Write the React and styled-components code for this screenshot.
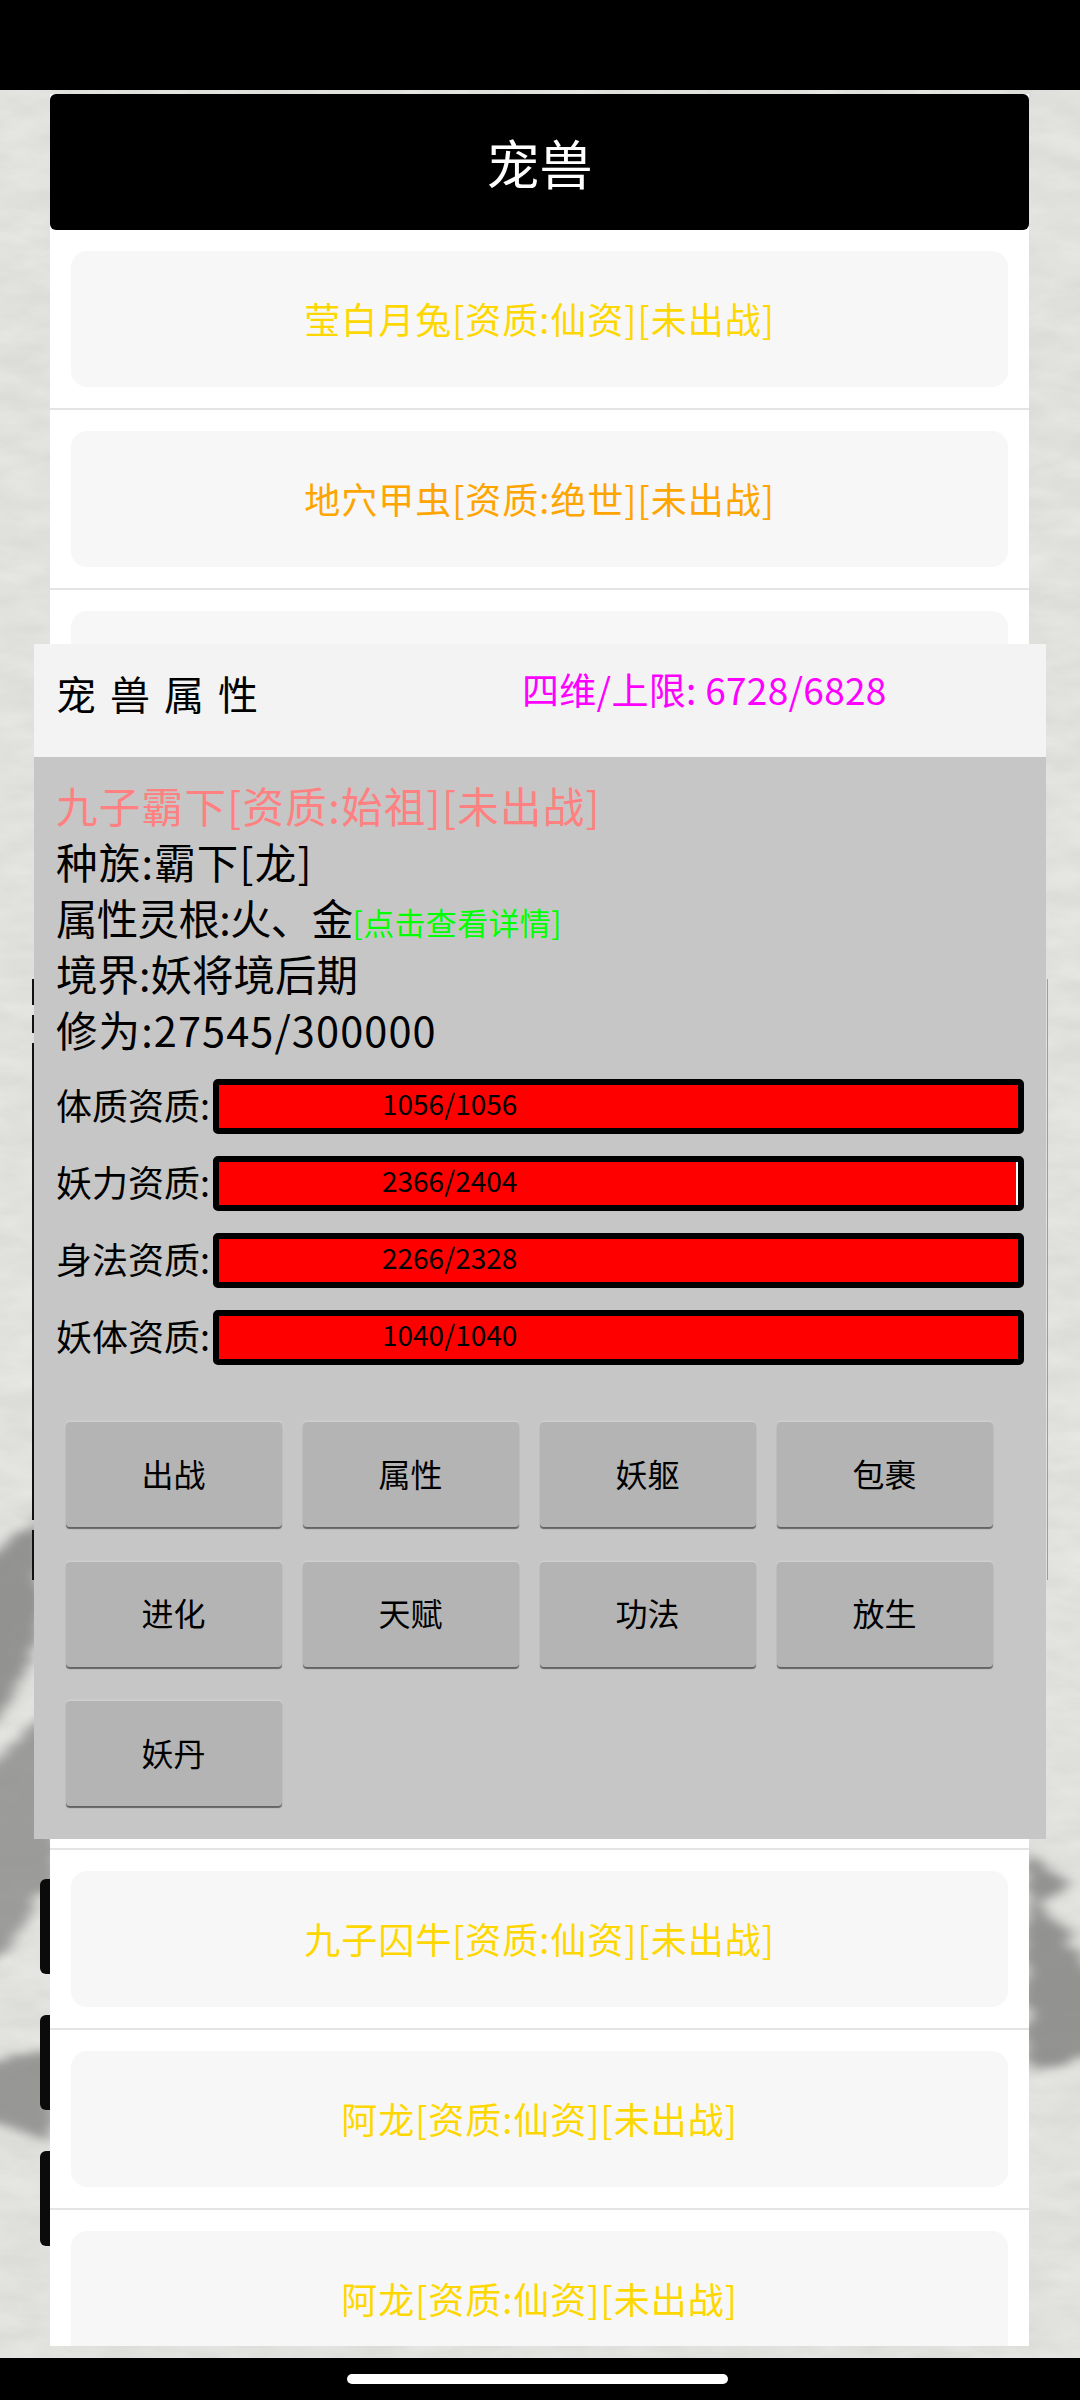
import React from 'react'
import styled, { createGlobalStyle } from 'styled-components'

const GlobalStyle = createGlobalStyle`
  html, body {
    margin: 0;
    padding: 0;
    background: #000;
  }
  * {
    box-sizing: border-box;
  }
`

const Page = styled.div`
  width: 1080px;
  height: 2400px;
  display: grid;
  grid-template-rows: 90px 1fr 42px;
  overflow: hidden;
  font-family: 'Noto Sans CJK SC', 'Noto Sans', sans-serif;
  background: #000;
`

const StatusBar = styled.div`
  background: #000;
`

const Stage = styled.main`
  position: relative;
  padding-top: 4px;
  overflow: hidden;
  background: #dcdcd9;
`

const Backdrop = styled.svg`
  position: absolute;
  inset: 0;
  width: 100%;
  height: 100%;
`

const SideTab = styled.div`
  position: absolute;
  left: 40px;
  top: ${(p) => p.$top}px;
  width: 16px;
  height: 95px;
  border-radius: 6px 0 0 6px;
  background: #0b0b0b;
`

const BehindDialog = styled.div`
  position: absolute;
  left: 32px;
  top: 889px;
  width: 1016px;
  height: 601px;
  border-right: 1px solid #9c9c9c;
  &::before {
    content: '';
    position: absolute;
    left: 0;
    top: 0;
    bottom: 0;
    width: 2px;
    background: linear-gradient(
      #111 0 26px,
      transparent 26px 36px,
      #111 36px 54px,
      transparent 54px 64px,
      #111 64px 541px,
      transparent 541px 551px,
      #111 551px
    );
  }
`

const Modal = styled.section`
  position: relative;
  margin: 0 50px;
  width: 979px;
  height: 2252px;
  overflow: hidden;
  background: #fff;
`

const ModalHeader = styled.header`
  height: 136px;
  display: flex;
  align-items: center;
  justify-content: center;
  border-radius: 6px;
  background: #000;
  color: #fff;
  font-size: 53px;
`

const ListItem = styled.div`
  padding: 21px;
  border-bottom: 2px solid #e4e4e4;
`

const ListCard = styled.div`
  height: 136px;
  display: flex;
  align-items: center;
  justify-content: center;
  padding-bottom: 3px;
  border-radius: 16px;
  background: #f7f7f7;
  color: ${(p) => p.$color};
  font-size: 36px;
  letter-spacing: 1px;
`

const Panel = styled.section`
  position: absolute;
  left: 34px;
  top: 554px;
  width: 1012px;
  height: 1195px;
  display: flex;
  flex-direction: column;
  background: #c6c6c6;
`

const PanelHeader = styled.header`
  height: 113px;
  flex-shrink: 0;
  display: grid;
  grid-template-columns: 466px 1fr;
  align-items: center;
  padding: 0 0 15px 22px;
  background: #f3f3f3;
`

const PanelTitle = styled.h2`
  margin: 0;
  font-size: 40px;
  font-weight: 400;
  letter-spacing: 14px;
  color: #000;
`

const LimitText = styled.div`
  margin-bottom: 8px;
  font-size: 37px;
  letter-spacing: 0.3px;
  color: #f0f;
`

const PanelBody = styled.div`
  padding: 20px 22px 33px 22px;
`

const InfoLine = styled.div`
  height: 56px;
  line-height: 56px;
  font-size: 41.5px;
  letter-spacing: ${(p) => p.$tracking || 0}px;
  white-space: nowrap;
  color: ${(p) => p.$color || '#000'};
`

const DetailLink = styled.span`
  font-size: 31px;
  letter-spacing: 0.3px;
  color: #0f0;
`

const Stats = styled.div`
  display: flex;
  flex-direction: column;
  gap: 22px;
  margin-top: 22px;
`

const StatRow = styled.div`
  display: flex;
  align-items: center;
  height: 55px;
`

const StatLabel = styled.span`
  width: 157px;
  flex-shrink: 0;
  margin-top: -6px;
  font-size: 36px;
  white-space: nowrap;
  color: #000;
`

const Bar = styled.div`
  position: relative;
  flex: 1;
  height: 55px;
  display: flex;
  align-items: center;
  padding-left: 163px;
  border: 6px solid #000;
  border-radius: 5px;
  background: #fff;
`

const BarFill = styled.div`
  position: absolute;
  left: 0;
  top: 0;
  bottom: 0;
  background: #f00;
`

const BarText = styled.span`
  position: relative;
  margin-bottom: 8px;
  font-size: 28px;
  color: #000;
`

const Actions = styled.div`
  display: grid;
  grid-template-columns: repeat(4, 216px);
  grid-auto-rows: 105px;
  column-gap: 21px;
  row-gap: 34.5px;
  margin: 57px 0 0 9.5px;
`

const ActionButton = styled.button`
  display: flex;
  align-items: center;
  justify-content: center;
  padding: 0 0 4px;
  border: 0;
  border-radius: 4px;
  background: #b4b4b4;
  box-shadow: 0 2px 1px rgba(0, 0, 0, 0.5), 0 -1px 2px rgba(255, 255, 255, 0.25);
  font-family: inherit;
  font-size: 32px;
  color: #000;
`

const NavBar = styled.div`
  display: flex;
  align-items: center;
  justify-content: center;
  padding-right: 6px;
  background: #000;
`

const HomeIndicator = styled.div`
  width: 381px;
  height: 10px;
  border-radius: 5px;
  background: #fff;
`

const GOLD = '#ffd700'
const ORANGE = '#ffa500'

const pets = [
  { name: '莹白月兔[资质:仙资][未出战]', color: GOLD },
  { name: '地穴甲虫[资质:绝世][未出战]', color: ORANGE },
  { name: '', color: GOLD },
  { name: '', color: GOLD },
  { name: '', color: GOLD },
  { name: '', color: GOLD },
  { name: '', color: GOLD },
  { name: '', color: GOLD },
  { name: '', color: GOLD },
  { name: '九子囚牛[资质:仙资][未出战]', color: GOLD },
  { name: '阿龙[资质:仙资][未出战]', color: GOLD },
  { name: '阿龙[资质:仙资][未出战]', color: GOLD },
]

const stats = [
  { label: '体质资质:', value: '1056/1056', fill: 100 },
  { label: '妖力资质:', value: '2366/2404', fill: 99.7 },
  { label: '身法资质:', value: '2266/2328', fill: 100 },
  { label: '妖体资质:', value: '1040/1040', fill: 100 },
]

const actions = ['出战', '属性', '妖躯', '包裹', '进化', '天赋', '功法', '放生', '妖丹']

const InkBackground = () => (
  <Backdrop viewBox="0 0 1080 2268" preserveAspectRatio="none">
    <defs>
      <filter id="paper" x="0" y="0" width="100%" height="100%">
        <feTurbulence type="fractalNoise" baseFrequency="0.02 0.05" numOctaves="4" seed="7" />
        <feColorMatrix values="0 0 0 0 1  0 0 0 0 1  0 0 0 0 0.99  0.5 0 0 0 -0.12" />
      </filter>
      <filter id="ink" x="-30%" y="-30%" width="160%" height="160%">
        <feTurbulence type="fractalNoise" baseFrequency="0.03 0.06" numOctaves="3" seed="3" result="rough" />
        <feDisplacementMap in="SourceGraphic" in2="rough" scale="28" xChannelSelector="R" yChannelSelector="G" />
        <feGaussianBlur stdDeviation="7 5" />
      </filter>
    </defs>
    <rect width="1080" height="2268" filter="url(#paper)" />
    <g filter="url(#ink)" fill="#8a8a88">
      <path d="M40 1430 L-30 1480 L-30 1680 L40 1550 Z" opacity="0.9" />
      <path d="M56 1610 L-30 1700 L-30 1900 L56 1790 Z" opacity="0.8" />
      <path d="M56 1955 L-30 1975 L-30 2030 L56 2050 Z" opacity="0.85" />
      <path d="M1026 1760 L1066 1798 L1044 1815 L1100 1890 L1100 1965 L1026 1985 Z" opacity="0.9" />
    </g>
  </Backdrop>
)

const App = () => (
  <Page>
    <GlobalStyle />
    <StatusBar />
    <Stage>
      <InkBackground />
      <BehindDialog />
      <SideTab $top={1789} />
      <SideTab $top={1925} />
      <SideTab $top={2061} />
      <Modal>
        <ModalHeader>宠兽</ModalHeader>
        {pets.map((pet, i) => (
          <ListItem key={i}>
            <ListCard $color={pet.color}>{pet.name}</ListCard>
          </ListItem>
        ))}
      </Modal>
      <Panel>
        <PanelHeader>
          <PanelTitle>宠兽属性</PanelTitle>
          <LimitText>四维/上限: 6728/6828</LimitText>
        </PanelHeader>
        <PanelBody>
          <InfoLine $color="#ff8080" $tracking={1.3}>九子霸下[资质:始祖][未出战]</InfoLine>
          <InfoLine $tracking={1.2}>种族:霸下[龙]</InfoLine>
          <InfoLine $tracking={-0.7}>
            属性灵根:火、金<DetailLink>[点击查看详情]</DetailLink>
          </InfoLine>
          <InfoLine>境界:妖将境后期</InfoLine>
          <InfoLine $tracking={1.1}>修为:27545/300000</InfoLine>
          <Stats>
            {stats.map((stat) => (
              <StatRow key={stat.label}>
                <StatLabel>{stat.label}</StatLabel>
                <Bar>
                  <BarFill style={{ width: `${stat.fill}%` }} />
                  <BarText>{stat.value}</BarText>
                </Bar>
              </StatRow>
            ))}
          </Stats>
          <Actions>
            {actions.map((action) => (
              <ActionButton key={action}>{action}</ActionButton>
            ))}
          </Actions>
        </PanelBody>
      </Panel>
    </Stage>
    <NavBar>
      <HomeIndicator />
    </NavBar>
  </Page>
)

export default App
